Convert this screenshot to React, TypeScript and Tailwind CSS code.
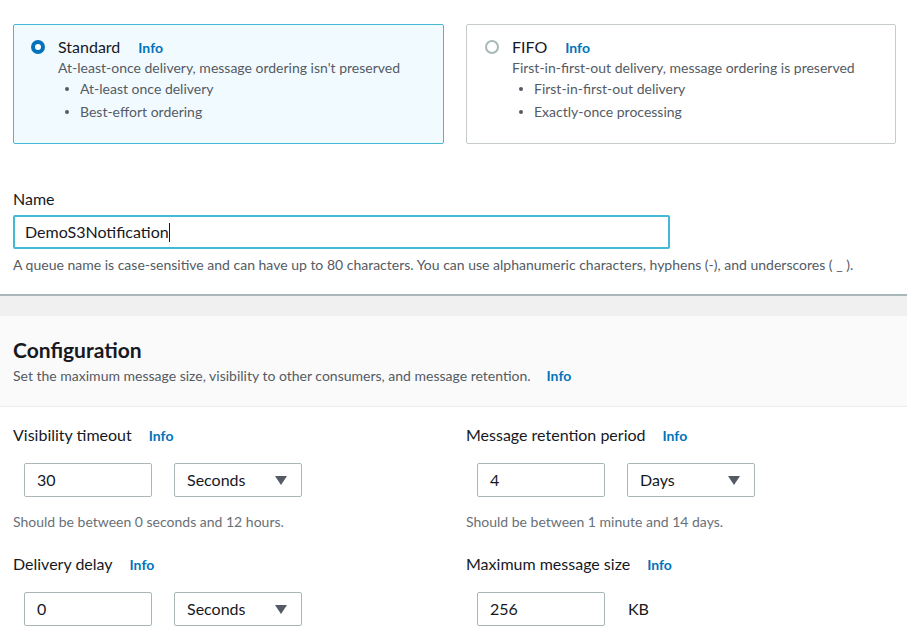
import React from 'react';

const font = { fontFamily: 'Lato, "Noto Sans", sans-serif' };

const Info = ({ className = '' }: { className?: string }) => (
  <span className={`text-[14px] font-bold text-[#0073bb] ${className}`}>Info</span>
);

const Radio = ({ checked }: { checked: boolean }) =>
  checked ? (
    <span className="mt-[3px] w-[14px] h-[14px] rounded-full border-[4px] border-[#0073bb] bg-white shrink-0" />
  ) : (
    <span className="mt-[3px] ml-[1px] w-[14px] h-[14px] rounded-full border-[2px] border-[#aab7b8] bg-white shrink-0" />
  );

const QueueType = ({
  checked,
  title,
  desc,
  bullets,
}: {
  checked: boolean;
  title: string;
  desc: string;
  bullets: string[];
}) => (
  <div
    className={`h-[120px] rounded-[2px] border pl-[17px] pt-[12px] flex gap-[13px] ${
      checked ? 'border-[#44b9d6] bg-[#f1faff]' : 'border-[#c6cbcb] bg-white'
    }`}
  >
    <Radio checked={checked} />
    <div>
      <div className="flex items-baseline gap-[18px]">
        <span className="text-[16px] text-[#16191f] leading-[20px]">{title}</span>
        <Info />
      </div>
      <p className="text-[14px] text-[#545b64] leading-[20px]">{desc}</p>
      <ul className="-mt-[1px]">
        {bullets.map((b) => (
          <li key={b} className="flex items-center text-[14px] text-[#545b64] leading-[23px] pl-[7px]">
            <span className="w-[4px] h-[4px] rounded-full bg-[#545b64] mr-[11px]" />
            {b}
          </li>
        ))}
      </ul>
    </div>
  </div>
);

const NumberBox = ({ value }: { value: string }) => (
  <div className="w-[128px] h-[34px] border border-[#aab7b8] rounded-[2px] bg-white flex items-center px-[12px] text-[16px] text-[#16191f]">
    {value}
  </div>
);

const SelectBox = ({ value }: { value: string }) => (
  <div className="w-[128px] h-[34px] border border-[#aab7b8] rounded-[2px] bg-white flex items-center justify-between pl-[12px] pr-[14px] text-[16px] text-[#16191f]">
    <span>{value}</span>
    <svg width="12" height="9" viewBox="0 0 12 9">
      <path d="M0 0 L12 0 L6 9 Z" fill="#545b64" />
    </svg>
  </div>
);

const Field = ({
  label,
  unit,
  value,
  help,
  kb,
}: {
  label: string;
  unit?: string;
  value: string;
  help?: string;
  kb?: boolean;
}) => (
  <div>
    <div className="flex items-baseline gap-[17px] h-[22px]">
      <span className="text-[16px] text-[#16191f]">{label}</span>
      <Info />
    </div>
    <div className="mt-[18px] pl-[11px] flex items-center gap-[22px]">
      <NumberBox value={value} />
      {unit && <SelectBox value={unit} />}
      {kb && <span className="text-[16px] text-[#16191f] ml-[1px]">KB</span>}
    </div>
    {help && <p className="mt-[15px] text-[14px] text-[#687078] leading-[20px]">{help}</p>}
  </div>
);

export default function App() {
  return (
    <div className="w-[907px] h-[629px] overflow-hidden bg-white" style={font}>
      <div className="px-[13px] pt-[24px]">
        <div className="grid grid-cols-[431px_430px] gap-[22px]">
          <QueueType
            checked
            title="Standard"
            desc="At-least-once delivery, message ordering isn't preserved"
            bullets={['At-least once delivery', 'Best-effort ordering']}
          />
          <QueueType
            checked={false}
            title="FIFO"
            desc="First-in-first-out delivery, message ordering is preserved"
            bullets={['First-in-first-out delivery', 'Exactly-once processing']}
          />
        </div>

        <div className="mt-[45px]">
          <div className="text-[16px] text-[#16191f] leading-[20px]">Name</div>
          <div className="mt-[6px] w-[657px] h-[34px] border-2 border-[#44b9d6] rounded-[2px] flex items-center pl-[10px] text-[16px] text-[#16191f]">
            DemoS3Notification<span className="w-px h-[19px] bg-[#16191f]" />
          </div>
          <p className="mt-[6px] text-[14px] text-[#545b64] leading-[20px]">
            A queue name is case-sensitive and can have up to 80 characters. You can use alphanumeric characters, hyphens (-), and underscores ( _ ).
          </p>
        </div>
      </div>

      <div className="mt-[19px] border-t-2 border-[#aab7b8] bg-[#eff0ef] pt-[20px]">
        <div className="bg-white">
          <div className="bg-[#fafafa] border-b border-[#eaeded] px-[13px] pt-[21px] h-[91px]">
            <h2 className="text-[21px] font-bold text-[#16191f] leading-[26px]">Configuration</h2>
            <p className="mt-[3px] text-[14px] text-[#545b64] leading-[20px]">
              Set the maximum message size, visibility to other consumers, and message retention.
              <Info className="ml-[16px]" />
            </p>
          </div>
          <div className="px-[13px] pt-[16px] grid grid-cols-[453px_1fr] gap-y-[20px] pb-[10px]">
            <Field label="Visibility timeout" value="30" unit="Seconds" help="Should be between 0 seconds and 12 hours." />
            <Field label="Message retention period" value="4" unit="Days" help="Should be between 1 minute and 14 days." />
            <Field label="Delivery delay" value="0" unit="Seconds" />
            <Field label="Maximum message size" value="256" kb />
          </div>
        </div>
      </div>
    </div>
  );
}
